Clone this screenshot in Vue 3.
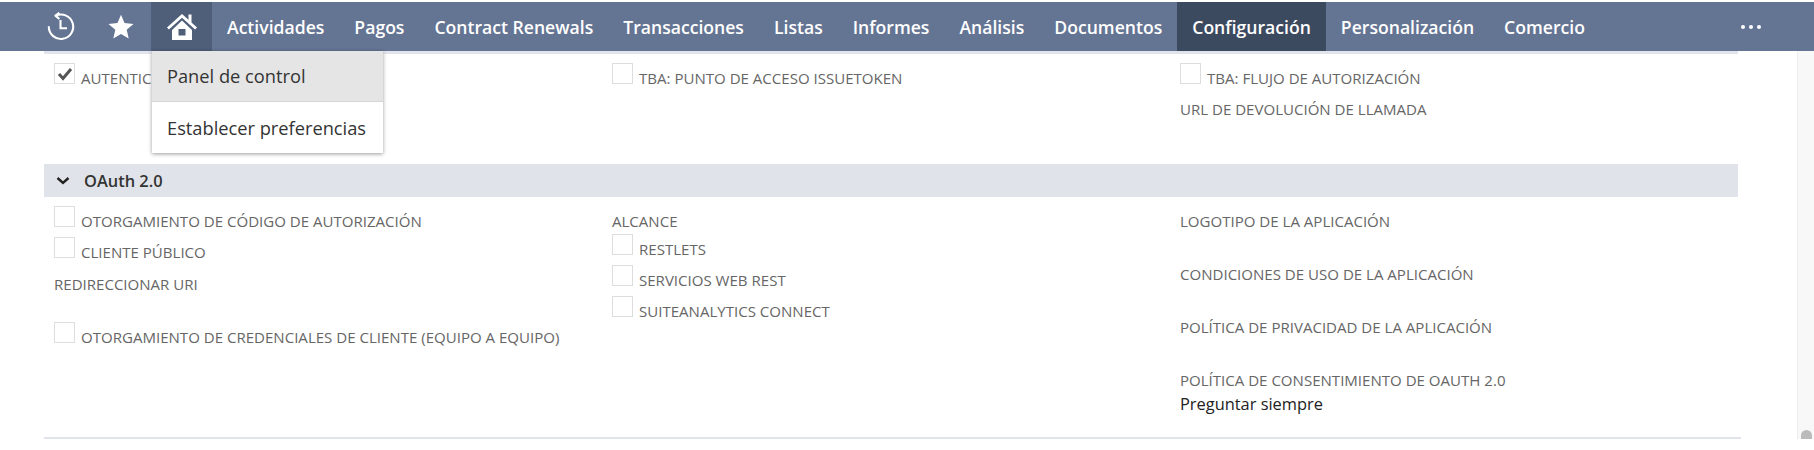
<script setup>
const navItems = [
  'Actividades',
  'Pagos',
  'Contract Renewals',
  'Transacciones',
  'Listas',
  'Informes',
  'Análisis',
  'Documentos',
  'Configuración',
  'Personalización',
  'Comercio',
]
</script>

<template>
  <div class="page">
    <header class="nav">
      <a class="icon-tab">
        <svg width="30" height="30" viewBox="0 0 30 30" fill="none" stroke="#fff" stroke-width="2.1">
          <path d="M10 3.6A12.2 12.2 0 1 1 2.8 15" stroke-linecap="round" />
          <path d="M13.4 .8L9.4 3.6l4 3.4" stroke-linejoin="round" />
          <path d="M14.5 8v8.2H21" />
        </svg>
      </a>
      <a class="icon-tab">
        <svg width="26" height="26" viewBox="0 0 26 26" fill="#fff">
          <path d="M13 .8l3.5 8.3 9 .8-6.8 5.9 2 8.8L13 20l-7.7 4.6 2-8.8L.5 9.9l9-.8z" />
        </svg>
      </a>
      <a class="icon-tab home">
        <svg width="32" height="30" viewBox="0 0 32 30" fill="#fff">
          <path d="M16 2L1 15.5l1.9 2L16 5.7l13.1 11.8 1.9-2-5.5-5V2.5h-3v5.3z" />
          <path d="M6 18l10-9.4L26 18v10H6zm6.5-1v6.5h7V17z" fill-rule="evenodd" />
        </svg>
      </a>
      <a
        v-for="item in navItems"
        :key="item"
        class="tab"
        :class="{ active: item === 'Configuración' }"
      >{{ item }}</a>
      <span class="more"><i></i><i></i><i></i></span>
    </header>

    <div class="menu">
      <div class="menu-item hover">Panel de control</div>
      <div class="menu-item">Establecer preferencias</div>
    </div>

    <div class="body">
      <main class="content">
        <div class="strip"></div>

        <section class="fields top-fields">
          <div class="col">
            <label class="check"><span class="box"><svg width="16" height="14" viewBox="0 0 16 14"><path d="M2 7l4 4.4L14 2" fill="none" stroke="#555" stroke-width="3" /></svg></span>AUTENTIC</label>
          </div>
          <div class="col">
            <label class="check"><span class="box"></span>TBA: PUNTO DE ACCESO ISSUETOKEN</label>
          </div>
          <div class="col">
            <label class="check"><span class="box"></span>TBA: FLUJO DE AUTORIZACIÓN</label>
            <p class="label url">URL DE DEVOLUCIÓN DE LLAMADA</p>
          </div>
        </section>

        <h2 class="band">
          <svg width="14" height="10" viewBox="0 0 14 10" fill="none" stroke="#222" stroke-width="2.4"><path d="M1.5 2l5.5 5 5.5-5" /></svg>
          OAuth 2.0
        </h2>

        <section class="fields lower-fields">
          <div class="col">
            <label class="check"><span class="box"></span>OTORGAMIENTO DE CÓDIGO DE AUTORIZACIÓN</label>
            <label class="check"><span class="box"></span>CLIENTE PÚBLICO</label>
            <p class="label redirect">REDIRECCIONAR URI</p>
            <label class="check credentials"><span class="box"></span>OTORGAMIENTO DE CREDENCIALES DE CLIENTE (EQUIPO A EQUIPO)</label>
          </div>
          <div class="col">
            <p class="label scope">ALCANCE</p>
            <label class="check"><span class="box"></span>RESTLETS</label>
            <label class="check"><span class="box"></span>SERVICIOS WEB REST</label>
            <label class="check"><span class="box"></span>SUITEANALYTICS CONNECT</label>
          </div>
          <div class="col right">
            <p class="label">LOGOTIPO DE LA APLICACIÓN</p>
            <p class="label">CONDICIONES DE USO DE LA APLICACIÓN</p>
            <p class="label">POLÍTICA DE PRIVACIDAD DE LA APLICACIÓN</p>
            <p class="label">POLÍTICA DE CONSENTIMIENTO DE OAUTH 2.0</p>
            <p class="value">Preguntar siempre</p>
          </div>
        </section>

        <div class="end-line"></div>
      </main>
      <aside class="scrollbar"><span class="thumb"></span></aside>
    </div>
  </div>
</template>

<style>
html,
body {
  background: #fff;
}
</style>

<style scoped>
.page {
  position: relative;
  width: 1814px;
  height: 450px;
  overflow: hidden;
  padding-top: 2px;
  box-sizing: border-box;
  font-family: "Open Sans", sans-serif;
  color: #666;
}

.nav {
  display: flex;
  height: 49px;
  padding-left: 31px;
  background: #647493;
  color: #fff;
}

.icon-tab {
  display: flex;
  align-items: center;
  justify-content: center;
  width: 60px;
}

.icon-tab.home {
  width: 61px;
  background: #4f5f7a;
}

.tab {
  display: flex;
  align-items: center;
  padding: 0 15px;
  font-size: 17.6px;
  font-weight: 600;
  white-space: nowrap;
}

.tab.active {
  background: #3c4a60;
}

.more {
  display: flex;
  align-items: center;
  gap: 4px;
  margin-left: auto;
  margin-right: 53px;
}

.more i {
  width: 4px;
  height: 4px;
  border-radius: 50%;
  background: #fff;
}

.menu {
  position: absolute;
  top: 51px;
  left: 152px;
  width: 231px;
  background: #fff;
  box-shadow: 0 1px 4px rgba(0, 0, 0, 0.4);
  color: #333;
  font-size: 18.25px;
  font-weight: 500;
}

.menu-item {
  display: flex;
  align-items: center;
  height: 51px;
  padding-left: 15px;
}

.menu-item.hover {
  background: #e5e5e5;
  border-bottom: 1px solid #d5d5d5;
  height: 50px;
  padding-bottom: 2px;
  box-sizing: border-box;
  height: 51px;
}

.body {
  display: flex;
  height: 388px;
}

.content {
  display: flex;
  flex-direction: column;
  width: 1797px;
  padding: 0 59px 0 44px;
  box-sizing: border-box;
}

.strip {
  height: 3px;
  background: #e1e5eb;
}

.fields {
  display: grid;
  grid-template-columns: 558px 568px 1fr;
  padding-left: 10px;
}

.top-fields {
  height: 110px;
  padding-top: 3px;
  box-sizing: border-box;
}

.lower-fields {
  padding-top: 3px;
}

.col {
  display: flex;
  flex-direction: column;
}

.check {
  display: flex;
  align-items: flex-end;
  height: 31px;
  font-size: 15.05px;
  line-height: 19px;
  white-space: nowrap;
}

.box {
  display: flex;
  align-items: center;
  justify-content: center;
  flex: none;
  width: 21px;
  height: 21px;
  margin: 0 6px 4px 0;
  border: 1px solid #ddd;
  box-sizing: border-box;
}

.label {
  margin: 0;
  font-size: 15.05px;
  line-height: 19px;
}

.url {
  margin-top: 12px;
}

.band {
  display: flex;
  align-items: center;
  gap: 14px;
  height: 33px;
  margin: 0;
  padding-left: 12px;
  background: #e0e4ea;
  color: #333;
  font-size: 16.4px;
  font-weight: 600;
}

.redirect {
  margin-top: 13px;
}

.credentials {
  margin-top: 22px;
}

.scope {
  margin: 12px 0 -3px;
}

.right .label {
  margin-top: 34px;
}

.right .label:first-child {
  margin-top: 12px;
}

.value {
  margin: 4px 0 0;
  color: #222;
  font-size: 16.4px;
  line-height: 19px;
}

.end-line {
  width: 1697px;
  height: 2px;
  margin-top: auto;
  background: #e1e5eb;
}

.scrollbar {
  display: flex;
  flex: none;
  align-items: flex-end;
  justify-content: center;
  width: 17px;
  background: #f8f8f8;
  border-left: 1px solid #eee;
  box-sizing: border-box;
}

.thumb {
  width: 11px;
  height: 9px;
  border-radius: 6px 6px 0 0;
  background: #bbb;
}
</style>
